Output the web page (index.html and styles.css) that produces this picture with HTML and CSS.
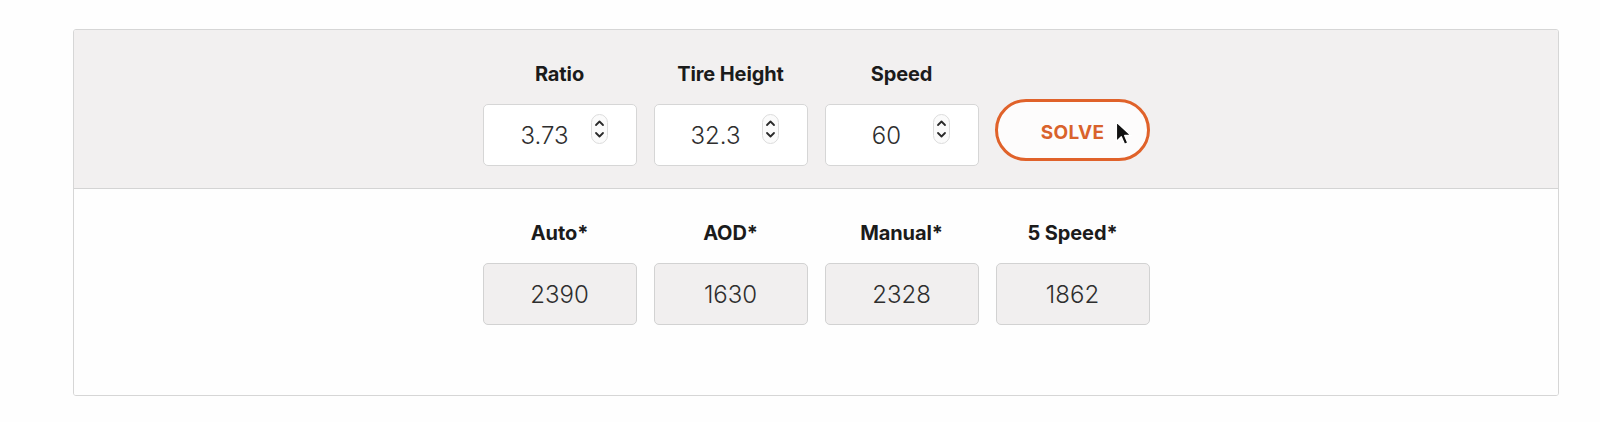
FILE: index.html
```html
<!DOCTYPE html>
<html lang="en">
<head>
  <meta charset="UTF-8">
  <meta name="viewport" content="width=device-width, initial-scale=1.0">
  <title>Gear Ratio RPM</title>
  <link rel="stylesheet" href="styles.css">
</head>
<body>

<div class="calc">
  <!-- Inputs -->
  <div class="section inputs">
    <div class="field">
      <label>Ratio</label>
      <div class="box">
        <span class="value">3.73</span>
        <span class="spinner">
          <svg width="17" height="30" viewBox="0 0 17 30"><rect x="0.5" y="0.5" width="16" height="29" rx="8" fill="#fbfbfb" stroke="#dcdcdc"/><path d="M5 11 L8.5 7.5 L12 11" fill="none" stroke="#2a2a2a" stroke-width="1.8" stroke-linecap="round" stroke-linejoin="round"/><path d="M5 19 L8.5 22.5 L12 19" fill="none" stroke="#2a2a2a" stroke-width="1.8" stroke-linecap="round" stroke-linejoin="round"/></svg>
        </span>
      </div>
    </div>
    <div class="field">
      <label>Tire Height</label>
      <div class="box">
        <span class="value">32.3</span>
        <span class="spinner">
          <svg width="17" height="30" viewBox="0 0 17 30"><rect x="0.5" y="0.5" width="16" height="29" rx="8" fill="#fbfbfb" stroke="#dcdcdc"/><path d="M5 11 L8.5 7.5 L12 11" fill="none" stroke="#2a2a2a" stroke-width="1.8" stroke-linecap="round" stroke-linejoin="round"/><path d="M5 19 L8.5 22.5 L12 19" fill="none" stroke="#2a2a2a" stroke-width="1.8" stroke-linecap="round" stroke-linejoin="round"/></svg>
        </span>
      </div>
    </div>
    <div class="field">
      <label>Speed</label>
      <div class="box">
        <span class="value">60</span>
        <span class="spinner">
          <svg width="17" height="30" viewBox="0 0 17 30"><rect x="0.5" y="0.5" width="16" height="29" rx="8" fill="#fbfbfb" stroke="#dcdcdc"/><path d="M5 11 L8.5 7.5 L12 11" fill="none" stroke="#2a2a2a" stroke-width="1.8" stroke-linecap="round" stroke-linejoin="round"/><path d="M5 19 L8.5 22.5 L12 19" fill="none" stroke="#2a2a2a" stroke-width="1.8" stroke-linecap="round" stroke-linejoin="round"/></svg>
        </span>
      </div>
    </div>
    <div class="field solve-wrap">
      <button class="solve">SOLVE</button>
      <svg class="cursor" width="18" height="26" viewBox="0 0 16 24"><path d="M1 1 L1 19 L5.5 14.5 L8.5 21.5 L11.5 20.2 L8.6 13.4 L14.5 13.4 Z" fill="#111" stroke="#fff" stroke-width="1.2" stroke-linejoin="round"/></svg>
    </div>
  </div>

  <!-- Results -->
  <div class="section results">
    <div class="field">
      <label>Auto*</label>
      <div class="box out">2390</div>
    </div>
    <div class="field">
      <label>AOD*</label>
      <div class="box out">1630</div>
    </div>
    <div class="field">
      <label>Manual*</label>
      <div class="box out">2328</div>
    </div>
    <div class="field">
      <label>5 Speed*</label>
      <div class="box out">1862</div>
    </div>
  </div>
</div>

</body>
</html>
```

FILE: styles.css
```css
body {
  font-family: Inter, "Noto Sans", sans-serif;
  margin: 0;
  background-color: #fefefe;
  color: #1b1b1b;
}

.calc {
  box-sizing: border-box;
  width: 1486px;
  margin: 29px 0 0 73px;
  border: 1px solid #d6d6d6;
  border-radius: 3px;
  overflow: hidden;
}

.section {
  display: flex;
  justify-content: center;
  gap: 17px;
}

.inputs {
  background-color: #f2f0f0;
  padding: 32px 0 22px;
  border-bottom: 1px solid #d4d4d4;
}

.results {
  background-color: #fefefe;
  padding: 32px 0 70px;
}

.field {
  width: 154px;
  display: flex;
  flex-direction: column;
  align-items: center;
  gap: 18px;
}

.field label {
  font-size: 20px;
  line-height: 24px;
  font-weight: 700;
  letter-spacing: -0.1px;
}

.box {
  box-sizing: border-box;
  width: 154px;
  height: 62px;
  display: flex;
  align-items: center;
  background-color: #fff;
  border: 1px solid #d6d6d6;
  border-radius: 5px;
  font-size: 24px;
  font-weight: 300;
  color: #2e2e2e;
  padding-right: 28px;
}

.value {
  flex: 1;
  text-align: center;
  padding-left: 15px;
}

.spinner {
  display: flex;
  margin-bottom: 12px;
}

.box.out {
  justify-content: center;
  padding: 0;
  background-color: #f1efef;
  border-color: #d2d2d2;
}

/* Solve button sits a little higher than the inputs */
.solve-wrap {
  position: relative;
  align-self: flex-end;
  margin-bottom: 5px;
}

.solve {
  box-sizing: border-box;
  width: 155px;
  height: 62px;
  padding-top: 5px;
  border: 3px solid #e0622a;
  border-radius: 31px;
  background-color: #fdfcfc;
  color: #d9622b;
  font-family: Inter, "Noto Sans", sans-serif;
  font-size: 19px;
  font-weight: 700;
  letter-spacing: 0.3px;
  cursor: pointer;
}

.cursor {
  position: absolute;
  left: 119px;
  top: 22px;
}
```
